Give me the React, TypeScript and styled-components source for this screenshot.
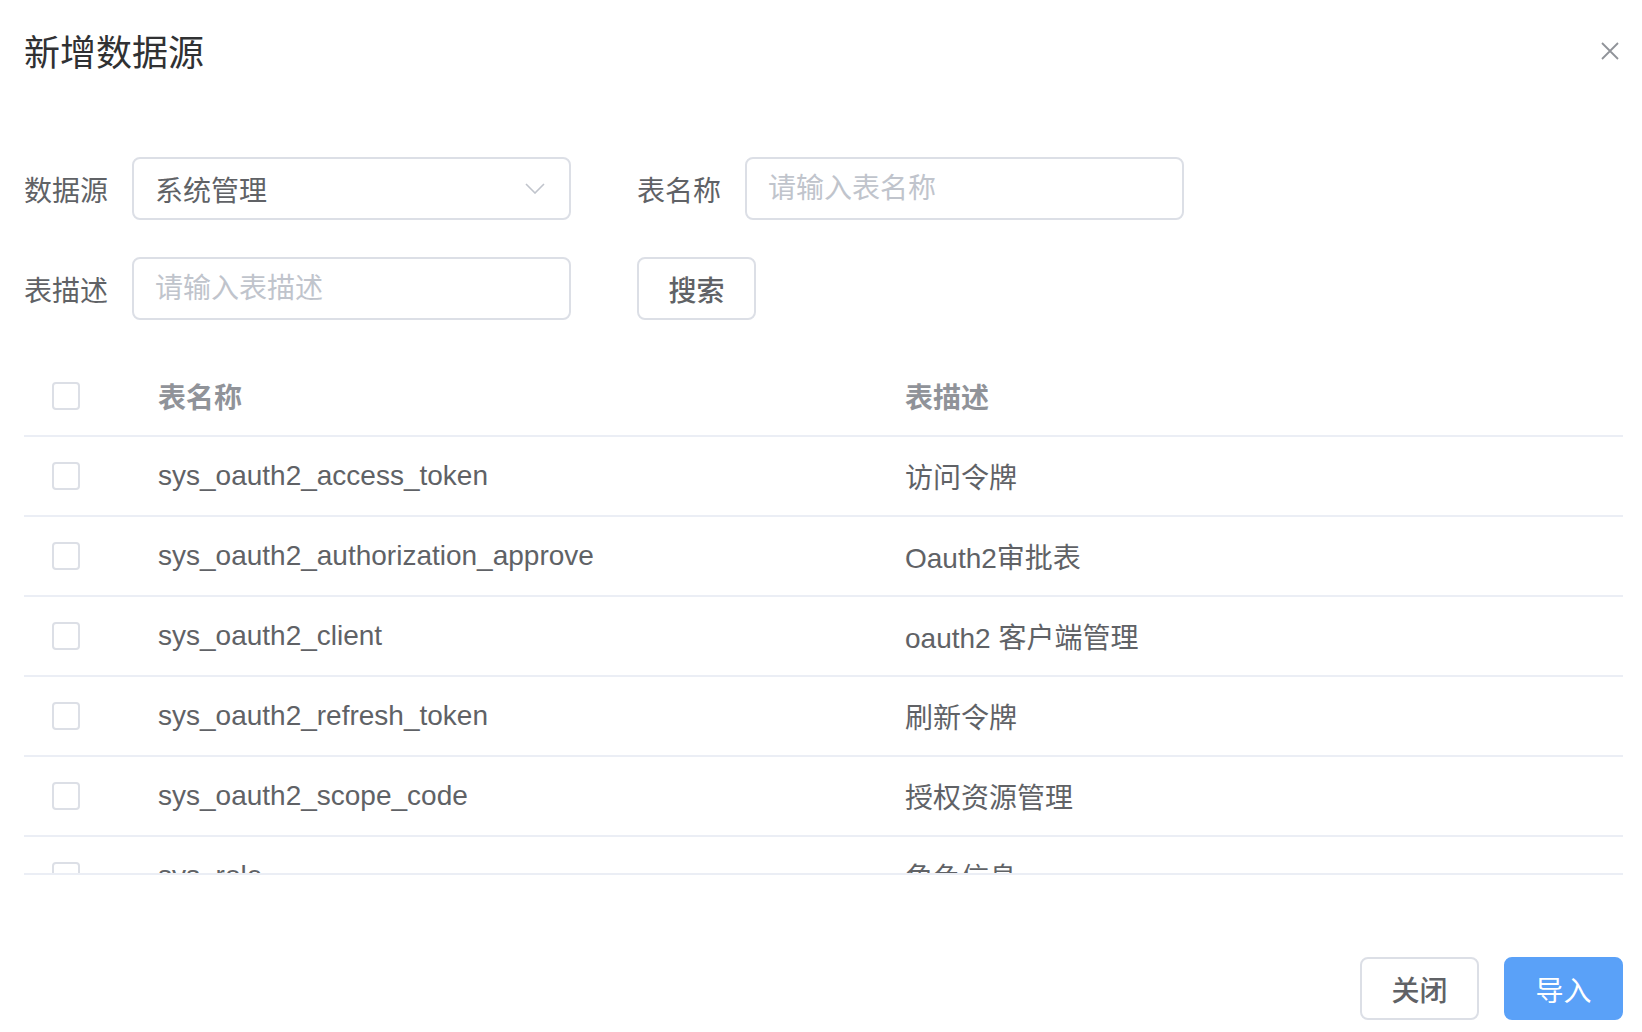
import React, { useState } from "react";
import styled, { createGlobalStyle } from "styled-components";

const GlobalStyle = createGlobalStyle`
  html, body {
    margin: 0;
    padding: 0;
    background: #fff;
    font-family: "Liberation Sans", "Noto Sans CJK SC", sans-serif;
  }
  * { box-sizing: border-box; }
`;

const Dialog = styled.div`
  width: 1642px;
  height: 1032px;
  padding: 36px 19px 0 24px;
  display: flex;
  flex-direction: column;
  background: #fff;
`;

const Header = styled.div`
  display: flex;
  align-items: center;
  justify-content: space-between;
  height: 36px;
`;

const Title = styled.h2`
  margin: 0;
  font-size: 36px;
  line-height: 36px;
  font-weight: 400;
  color: #303133;
`;

const CloseButton = styled.button`
  border: none;
  background: none;
  padding: 0;
  margin: 0 4px 6px 0;
  width: 18px;
  height: 18px;
  display: flex;
  cursor: pointer;
`;

const Form = styled.div`
  margin-top: 85px;
  display: flex;
  flex-direction: column;
  gap: 37px;
`;

const FormRow = styled.div`
  display: flex;
  align-items: center;
  gap: 66px;
`;

const FormItem = styled.div`
  display: flex;
  align-items: center;
`;

const Label = styled.label`
  width: 108px;
  padding-right: 24px;
  font-size: 28px;
  color: #606266;
  white-space: nowrap;
`;

const Field = styled.div`
  width: 439px;
  height: 63px;
  border: 2px solid #dcdfe6;
  border-radius: 8px;
  display: flex;
  align-items: center;
  justify-content: space-between;
  padding: 0 24px 0 21px;
  background: #fff;
`;

const Input = styled.input`
  border: none;
  outline: none;
  width: 100%;
  font-family: inherit;
  font-size: 28px;
  color: #606266;
  padding: 0;
  background: transparent;
  &::placeholder { color: #c0c4cc; }
`;

const SelectValue = styled.span`
  font-size: 28px;
  color: #606266;
`;

const Button = styled.button<{ $primary?: boolean }>`
  width: 119px;
  height: 63px;
  border-radius: 8px;
  border: 2px solid ${(p) => (p.$primary ? "#5aa1f8" : "#dcdfe6")};
  background: ${(p) => (p.$primary ? "#5aa1f8" : "#fff")};
  color: ${(p) => (p.$primary ? "#fff" : "#606266")};
  font-family: inherit;
  font-size: 28px;
  font-weight: ${(p) => (p.$primary ? 400 : 500)};
  cursor: pointer;
  padding: 0;
`;

const Table = styled.div`
  margin-top: 36px;
  display: flex;
  flex-direction: column;
`;

const Row = styled.div<{ $head?: boolean }>`
  display: grid;
  grid-template-columns: 110px 747px 1fr;
  align-items: center;
  height: ${(p) => (p.$head ? "81px" : "80px")};
  border-bottom: 2px solid #ebeef5;
  flex-shrink: 0;
`;

const Cell = styled.div<{ $head?: boolean }>`
  padding-left: 24px;
  font-size: 28px;
  color: ${(p) => (p.$head ? "#909399" : "#606266")};
  font-weight: ${(p) => (p.$head ? 700 : 400)};
  white-space: nowrap;
`;

const CheckCell = styled.div`
  padding-left: 28px;
  display: flex;
  align-items: center;
`;

const Checkbox = styled.span<{ $checked?: boolean }>`
  width: 28px;
  height: 28px;
  border: 2px solid ${(p) => (p.$checked ? "#409eff" : "#dcdfe6")};
  background: ${(p) => (p.$checked ? "#409eff" : "#fff")};
  border-radius: 4px;
  cursor: pointer;
`;

const Body = styled.div`
  height: 438px;
  overflow-y: auto;
  border-bottom: 2px solid #ebeef5;
  display: flex;
  flex-direction: column;
  scrollbar-width: none;
  &::-webkit-scrollbar { display: none; }
`;

const Footer = styled.div`
  margin-top: 82px;
  display: flex;
  justify-content: flex-end;
  gap: 25px;
`;

const tables = [
  { name: "sys_oauth2_access_token", desc: "访问令牌" },
  { name: "sys_oauth2_authorization_approve", desc: "Oauth2审批表" },
  { name: "sys_oauth2_client", desc: "oauth2 客户端管理" },
  { name: "sys_oauth2_refresh_token", desc: "刷新令牌" },
  { name: "sys_oauth2_scope_code", desc: "授权资源管理" },
  { name: "sys_role", desc: "角色信息" },
  { name: "sys_user", desc: "用户信息" },
];

export default function App() {
  const [checked, setChecked] = useState<string[]>([]);

  const toggle = (name: string) => {
    setChecked((c) => (c.includes(name) ? c.filter((n) => n !== name) : [...c, name]));
  };

  return (
    <>
      <GlobalStyle />
      <Dialog>
        <Header>
          <Title>新增数据源</Title>
          <CloseButton aria-label="close">
            <svg width="18" height="18" viewBox="0 0 18 18">
              <path d="M1 1L17 17M17 1L1 17" stroke="#909399" strokeWidth="1.8" />
            </svg>
          </CloseButton>
        </Header>

        <Form>
          <FormRow>
            <FormItem>
              <Label>数据源</Label>
              <Field>
                <SelectValue>系统管理</SelectValue>
                <svg width="20" height="11" viewBox="0 0 20 11">
                  <polyline points="1,1 10,10 19,1" fill="none" stroke="#c0c4cc" strokeWidth="1.6" />
                </svg>
              </Field>
            </FormItem>
            <FormItem>
              <Label>表名称</Label>
              <Field>
                <Input placeholder="请输入表名称" />
              </Field>
            </FormItem>
          </FormRow>
          <FormRow>
            <FormItem>
              <Label>表描述</Label>
              <Field>
                <Input placeholder="请输入表描述" />
              </Field>
            </FormItem>
            <Button>搜索</Button>
          </FormRow>
        </Form>

        <Table>
          <Row $head>
            <CheckCell>
              <Checkbox />
            </CheckCell>
            <Cell $head>表名称</Cell>
            <Cell $head>表描述</Cell>
          </Row>
          <Body>
            {tables.map((t) => (
              <Row key={t.name}>
                <CheckCell>
                  <Checkbox $checked={checked.includes(t.name)} onClick={() => toggle(t.name)} />
                </CheckCell>
                <Cell>{t.name}</Cell>
                <Cell>{t.desc}</Cell>
              </Row>
            ))}
          </Body>
        </Table>

        <Footer>
          <Button>关闭</Button>
          <Button $primary>导入</Button>
        </Footer>
      </Dialog>
    </>
  );
}
